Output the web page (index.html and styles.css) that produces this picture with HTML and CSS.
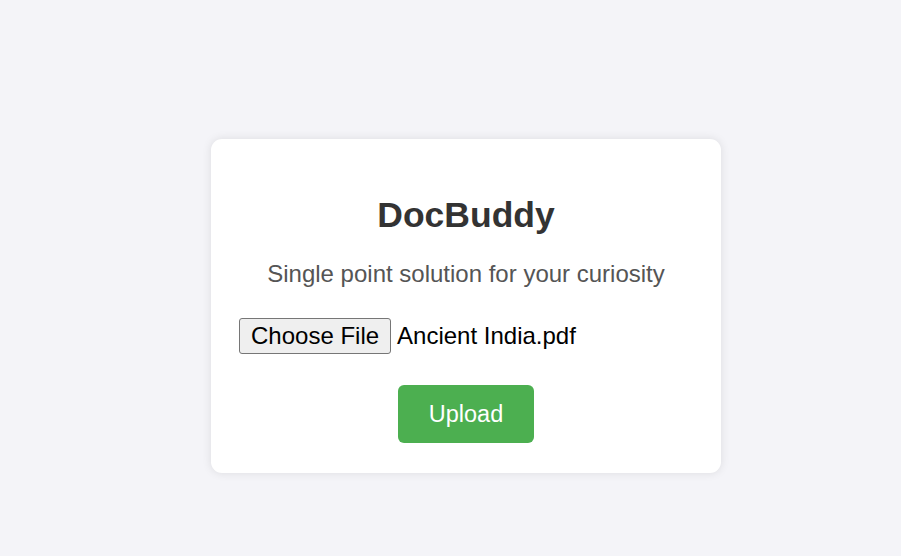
FILE: index.html
```html
<!DOCTYPE html>
<html lang="en">
<head>
<meta charset="utf-8">
<title>DocBuddy</title>
<link rel="stylesheet" href="styles.css">
</head>
<body>
<main class="page">
  <div class="card">
    <h1 class="title">DocBuddy</h1>
    <p class="subtitle">Single point solution for your curiosity</p>
    <div class="file-row">
      <button type="button" class="choose">Choose File</button><span class="file-name">Ancient India.pdf</span>
    </div>
    <button type="button" class="upload">Upload</button>
  </div>
</main>
</body>
</html>
```
FILE: styles.css
```css
html, body {
  margin: 0;
  padding: 0;
  background: #f4f4f8;
  font-family: "Liberation Sans", Arial, sans-serif;
}

.page {
  display: flex;
  align-items: flex-start;
  padding: 139px 0 0 211px;
  min-height: 556px;
  box-sizing: border-box;
}

.card {
  width: 510px;
  box-sizing: border-box;
  padding: 30px 28px;
  background: #ffffff;
  border-radius: 11px;
  box-shadow: 0 0 10px rgba(0, 0, 0, 0.1);
  text-align: center;
}

.title {
  margin: 25.5px 0 0;
  font-size: 35.5px;
  font-weight: bold;
  color: #333333;
}

.subtitle {
  margin: 24.5px 0 0;
  font-size: 24px;
  color: #555555;
}

.file-row {
  margin: 30px 0 0;
  display: flex;
  align-items: center;
  font-size: 24px;
  color: #000000;
}

.choose {
  font-family: inherit;
  font-size: 24px;
  line-height: normal;
  color: #000000;
  background: #efefef;
  border: 1.5px solid #767676;
  border-radius: 3px;
  padding: 1.5px 11px;
  margin: 0 6px 0 0;
  height: 36px;
}

.file-name {
  line-height: 36px;
}

.upload {
  margin-top: 31px;
  font-family: inherit;
  font-size: 23.5px;
  color: #ffffff;
  background: #4caf50;
  border: none;
  border-radius: 6px;
  width: 136px;
  height: 58px;
  padding: 0;
}
```
